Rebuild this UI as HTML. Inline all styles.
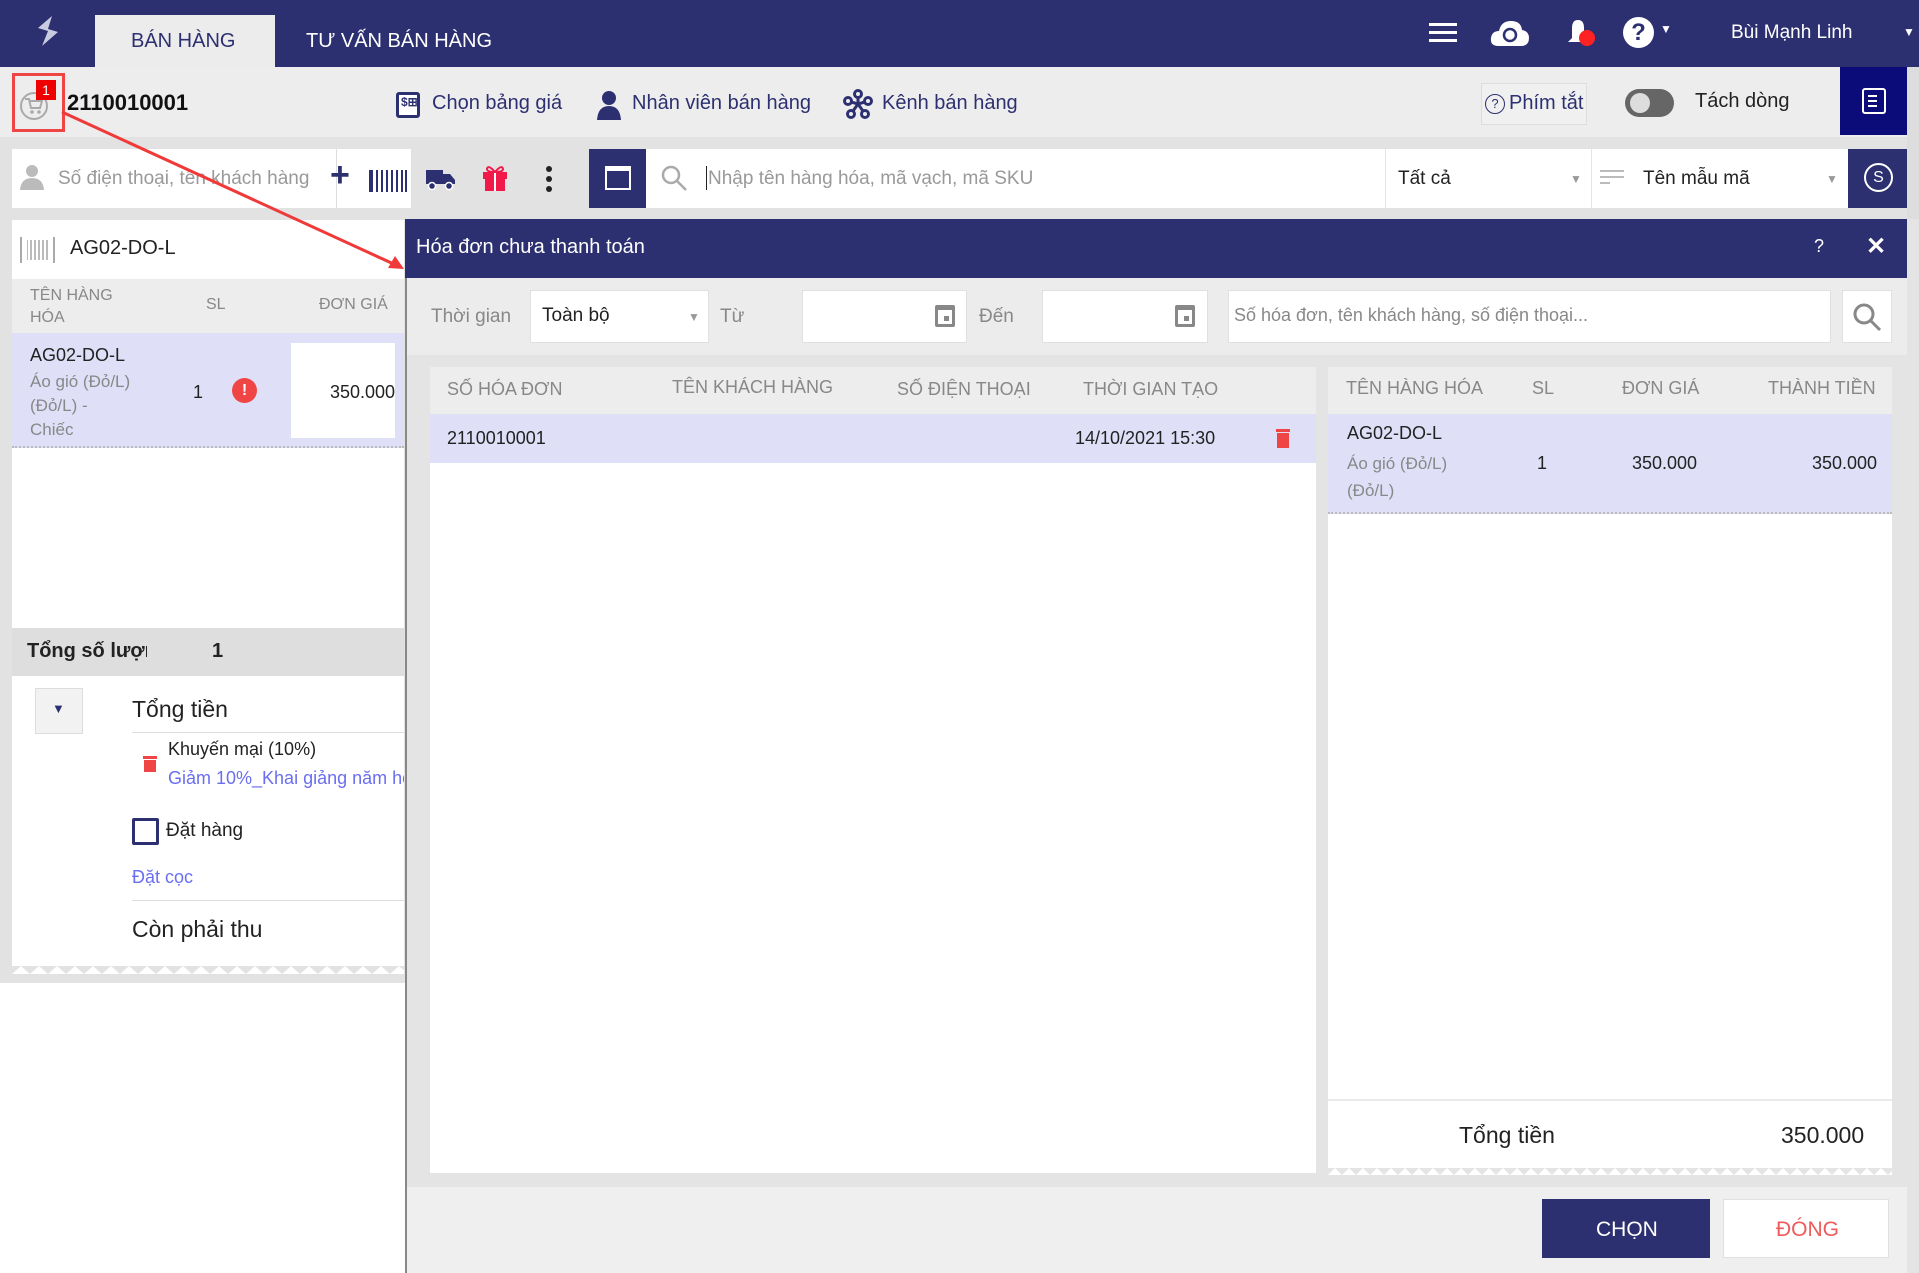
<!DOCTYPE html>
<html><head><meta charset="utf-8">
<style>
*{box-sizing:border-box;margin:0;padding:0}
body{width:1919px;height:1273px;position:relative;overflow:hidden;background:#fff;font-family:"Liberation Sans",sans-serif;color:#222}
.a{position:absolute}
.t{position:absolute;white-space:nowrap}
</style></head><body>
<!-- header -->
<div class="a" style="left:0;top:0;width:1919px;height:67px;background:#2d3070"></div>
<svg class="a" style="left:34px;top:14px" width="28" height="36" viewBox="0 0 28 36"><path d="M18 2 L4 14 L14 17 L8 32 L24 18 L14 15 Z" fill="#c9cbe0"/></svg>
<div class="a" style="left:95px;top:15px;width:180px;height:52px;background:#ececec"></div>
<div class="t" style="left:131px;top:30px;font-size:20px;color:#2d3070">BÁN HÀNG</div>
<div class="t" style="left:306px;top:30px;font-size:20px;color:#fff">TƯ VẤN BÁN HÀNG</div>
<div class="a" style="left:1429px;top:23px;width:28px;height:3px;background:#fff;box-shadow:0 8px 0 #fff,0 16px 0 #fff"></div>
<svg class="a" style="left:1490px;top:18px" width="40" height="30" viewBox="0 0 40 30"><path d="M8 28 Q0 28 1 20 Q2 13 9 13 Q11 3 21 3 Q31 3 32 12 Q39 13 39 20 Q39 28 31 28 Z" fill="#fff"/><circle cx="20" cy="17" r="6" fill="none" stroke="#2d3070" stroke-width="2.5"/></svg>
<svg class="a" style="left:1564px;top:16px" width="36" height="34" viewBox="0 0 36 34"><path d="M4 26 L8 22 L8 12 Q8 4 14 4 Q20 4 20 12 L20 22 L24 26 Z" fill="#fff"/><circle cx="23" cy="22" r="8" fill="#f22"/></svg>
<div class="a" style="left:1623px;top:17px;width:31px;height:31px;border-radius:50%;background:#fff;color:#2d3070;font-weight:bold;font-size:24px;text-align:center;line-height:31px">?</div>
<div class="t" style="left:1660px;top:22px;color:#fff;font-size:12px">▼</div>
<div class="t" style="left:1731px;top:22px;color:#fff;font-size:19px">Bùi Mạnh Linh</div>
<div class="t" style="left:1903px;top:25px;color:#fff;font-size:12px">▼</div>
<!-- row2 -->
<div class="a" style="left:0;top:67px;width:1919px;height:70px;background:#ededed"></div>
<div class="a" style="left:0;top:137px;width:1919px;height:846px;background:#e2e2e2"></div>
<div class="a" style="left:12px;top:73px;width:53px;height:59px;border:3px solid #f04545"></div>
<div class="a" style="left:20px;top:92px;width:28px;height:28px;border-radius:50%;border:2px solid #aaa"></div>
<svg class="a" style="left:25px;top:98px" width="18" height="16" viewBox="0 0 18 16" fill="#aaa"><path d="M0 1 H4 L6 10 H15 L17 3 H5" fill="none" stroke="#aaa" stroke-width="2"/><circle cx="7" cy="14" r="1.8"/><circle cx="14" cy="14" r="1.8"/></svg>
<div class="a" style="left:36px;top:80px;width:20px;height:20px;background:#e00;color:#fff;font-size:14px;text-align:center;line-height:20px">1</div>
<div class="t" style="left:67px;top:90px;font-size:22px;font-weight:bold;color:#111">2110010001</div>
<div class="a" style="left:396px;top:92px;width:24px;height:26px;border:3px solid #2d3070;border-radius:3px;background:#fff"></div>
<div class="t" style="left:401px;top:95px;font-size:12px;font-weight:bold;color:#2d3070">$⊞</div>
<div class="t" style="left:432px;top:92px;font-size:20px;color:#2d3070">Chọn bảng giá</div>
<svg class="a" style="left:596px;top:90px" width="26" height="30" viewBox="0 0 26 30"><circle cx="13" cy="8" r="7" fill="#2d3070"/><path d="M1 30 Q2 16 13 16 Q24 16 25 30 Z" fill="#2d3070"/></svg>
<div class="t" style="left:632px;top:92px;font-size:20px;color:#2d3070">Nhân viên bán hàng</div>
<svg class="a" style="left:843px;top:89px" width="30" height="30" viewBox="0 0 30 30" fill="none" stroke="#2d3070" stroke-width="3"><circle cx="15" cy="5" r="3.5"/><circle cx="5" cy="12" r="3.5"/><circle cx="25" cy="12" r="3.5"/><circle cx="8" cy="25" r="3.5"/><circle cx="22" cy="25" r="3.5"/><path d="M15 9 L15 15 M8 13 L15 15 L22 13 M10 22 L15 15 L20 22"/></svg>
<div class="t" style="left:882px;top:92px;font-size:20px;color:#2d3070">Kênh bán hàng</div>
<div class="a" style="left:1481px;top:83px;width:106px;height:42px;border:1px solid #ddd;background:#f0f0f0"></div>
<div class="a" style="left:1485px;top:94px;width:20px;height:20px;border:1.5px solid #2d3070;border-radius:50%;font-size:13px;text-align:center;line-height:17px;color:#2d3070">?</div>
<div class="t" style="left:1509px;top:92px;font-size:20px;color:#2d3070">Phím tắt</div>
<div class="a" style="left:1625px;top:89px;width:49px;height:28px;border-radius:14px;background:#666"></div>
<div class="a" style="left:1630px;top:93px;width:20px;height:20px;border-radius:50%;background:#ddd"></div>
<div class="t" style="left:1695px;top:90px;font-size:20px;color:#222">Tách dòng</div>
<div class="a" style="left:1840px;top:67px;width:67px;height:68px;background:#0b0b7a"></div>
<div class="a" style="left:1862px;top:88px;width:24px;height:26px;border:2.5px solid #fff;border-radius:3px"></div>
<div class="a" style="left:1868px;top:95px;width:9px;height:2px;background:#fff;box-shadow:0 5px 0 #fff,0 10px 0 #fff"></div>
<div class="a" style="left:1907px;top:67px;width:12px;height:1206px;background:#ddd"></div>
<!-- row3 -->
<div class="a" style="left:12px;top:149px;width:399px;height:59px;background:#fff"></div>
<div class="a" style="left:336px;top:149px;width:1px;height:59px;background:#ddd"></div>
<svg class="a" style="left:20px;top:164px" width="24" height="26" viewBox="0 0 24 26"><circle cx="12" cy="7" r="6" fill="#bbb"/><path d="M0 26 Q1 14 12 14 Q23 14 24 26Z" fill="#bbb"/></svg>
<div class="t" style="left:58px;top:168px;font-size:19px;color:#999">Số điện thoại, tên khách hàng</div>
<div class="t" style="left:330px;top:156px;font-size:34px;color:#2d3070;font-weight:bold">+</div>
<div class="a" style="left:369px;top:170px;width:38px;height:22px;border-left:2px solid #2d3070;border-right:2px solid #2d3070;background:repeating-linear-gradient(90deg,#2d3070 0 2px,#fff 2px 5px)"></div>
<svg class="a" style="left:426px;top:167px" width="30" height="24" viewBox="0 0 30 24"><rect x="0" y="3" width="17" height="14" fill="#2d3070"/><path d="M17 7 L24 7 L29 13 L29 17 L17 17Z" fill="#2d3070"/><circle cx="6" cy="19" r="3.5" fill="#2d3070" stroke="#fff" stroke-width="1.5"/><circle cx="23" cy="19" r="3.5" fill="#2d3070" stroke="#fff" stroke-width="1.5"/></svg>
<svg class="a" style="left:482px;top:164px" width="26" height="28" viewBox="0 0 26 28"><rect x="1" y="8" width="24" height="7" fill="#f0194a"/><rect x="3" y="15" width="20" height="12" fill="#f0194a"/><rect x="12" y="8" width="2" height="19" fill="#fff"/><path d="M13 8 Q6 0 5 5 Q5 8 13 8 Q20 0 21 5 Q21 8 13 8" fill="none" stroke="#f0194a" stroke-width="2"/></svg>
<div class="a" style="left:546px;top:166px;width:6px;height:6px;border-radius:50%;background:#222;box-shadow:0 10px 0 #222,0 20px 0 #222"></div>
<div class="a" style="left:589px;top:149px;width:57px;height:59px;background:#2d3070"></div>
<div class="a" style="left:605px;top:166px;width:26px;height:24px;border:2.5px solid #fff;border-top-width:5px"></div>
<div class="a" style="left:646px;top:149px;width:1261px;height:59px;background:#fff"></div>
<svg class="a" style="left:660px;top:164px" width="28" height="28" viewBox="0 0 28 28" fill="none" stroke="#aaa" stroke-width="2.5"><circle cx="11" cy="11" r="8"/><path d="M17 17 L26 26"/></svg>
<div class="a" style="left:706px;top:166px;width:1px;height:24px;background:#222"></div>
<div class="t" style="left:708px;top:168px;font-size:19px;color:#999">Nhập tên hàng hóa, mã vạch, mã SKU</div>
<div class="a" style="left:1385px;top:149px;width:1px;height:59px;background:#e4e4e4"></div>
<div class="t" style="left:1398px;top:168px;font-size:19px;color:#222">Tất cả</div>
<div class="t" style="left:1570px;top:172px;font-size:12px;color:#999">▼</div>
<div class="a" style="left:1591px;top:149px;width:1px;height:59px;background:#e4e4e4"></div>
<div class="a" style="left:1600px;top:170px;width:24px;height:2px;background:#bbb;box-shadow:0 6px 0 #bbb"></div>
<div class="a" style="left:1600px;top:182px;width:10px;height:2px;background:#bbb"></div>
<div class="t" style="left:1643px;top:168px;font-size:19px;color:#222">Tên mẫu mã</div>
<div class="t" style="left:1826px;top:172px;font-size:12px;color:#999">▼</div>
<div class="a" style="left:1848px;top:149px;width:59px;height:59px;background:#2d3070"></div>
<div class="a" style="left:1864px;top:163px;width:29px;height:29px;border:2px solid #fff;border-radius:50%;color:#fff;font-size:16px;text-align:center;line-height:25px">S</div>
<!-- left panel -->
<div class="a" style="left:12px;top:220px;width:392px;height:750px;background:#fff"></div>
<div class="a" style="left:20px;top:237px;width:35px;height:26px;border-left:2px solid #aaa;border-right:2px solid #aaa;background:repeating-linear-gradient(90deg,#bbb 0 2px,#fff 2px 4px);background-clip:content-box;padding:3px 5px"></div>
<div class="t" style="left:70px;top:237px;font-size:20px;color:#222">AG02-DO-L</div>
<div class="a" style="left:12px;top:279px;width:392px;height:54px;background:#ededed"></div>
<div class="t" style="left:30px;top:285px;font-size:16px;color:#888;line-height:22px">TÊN HÀNG<br>HÓA</div>
<div class="t" style="left:206px;top:296px;font-size:16px;color:#888">SL</div>
<div class="t" style="left:319px;top:296px;font-size:16px;color:#888">ĐƠN GIÁ</div>
<div class="a" style="left:12px;top:333px;width:392px;height:115px;background:#dfe0f7;border-bottom:2px dotted #bbb"></div>
<div class="t" style="left:30px;top:345px;font-size:18px;color:#222">AG02-DO-L</div>
<div class="t" style="left:30px;top:370px;font-size:17px;color:#888;line-height:24px">Áo gió (Đỏ/L)<br>(Đỏ/L) -<br>Chiếc</div>
<div class="t" style="left:193px;top:382px;font-size:18px">1</div>
<div class="a" style="left:232px;top:378px;width:25px;height:25px;border-radius:50%;background:#f04545;color:#fff;font-weight:bold;font-size:16px;text-align:center;line-height:25px">!</div>
<div class="a" style="left:291px;top:343px;width:104px;height:95px;background:#fff"></div>
<div class="t" style="left:330px;top:382px;font-size:18px;color:#222">350.000</div>
<div class="a" style="left:12px;top:628px;width:392px;height:48px;background:#dedede"></div>
<div class="t" style="left:27px;top:640px;font-size:20px;font-weight:bold;color:#222;width:120px;overflow:hidden">Tổng số lượng</div>
<div class="t" style="left:212px;top:640px;font-size:20px;font-weight:bold">1</div>
<div class="a" style="left:35px;top:688px;width:48px;height:46px;background:#f2f2f2;border:1px solid #ddd"></div>
<div class="t" style="left:52px;top:701px;font-size:13px;color:#2d3070">▼</div>
<div class="t" style="left:132px;top:696px;font-size:23px;color:#222">Tổng tiền</div>
<div class="a" style="left:132px;top:732px;width:272px;height:1px;background:#ddd"></div>
<svg class="a" style="left:142px;top:754px" width="16" height="18" viewBox="0 0 16 18"><rect x="1" y="2" width="14" height="3" fill="#f04545"/><rect x="2" y="6" width="12" height="12" fill="#f04545"/></svg>
<div class="t" style="left:168px;top:739px;font-size:18px;color:#222">Khuyến mại (10%)</div>
<div class="t" style="left:168px;top:768px;font-size:18px;color:#6a6ef0;width:236px;overflow:hidden">Giảm 10%_Khai giảng năm học</div>
<div class="a" style="left:132px;top:818px;width:27px;height:27px;border:3px solid #2d3070;border-radius:2px"></div>
<div class="t" style="left:166px;top:820px;font-size:19px;color:#222">Đặt hàng</div>
<div class="t" style="left:132px;top:867px;font-size:18px;color:#6a6ef0">Đặt cọc</div>
<div class="a" style="left:132px;top:900px;width:272px;height:1px;background:#ddd"></div>
<div class="t" style="left:132px;top:916px;font-size:23px;color:#222">Còn phải thu</div>
<svg class="a" style="left:12px;top:962px" width="392" height="12"><defs><pattern id="z" width="18" height="12" patternUnits="userSpaceOnUse"><path d="M0 12 L9 4 L18 12Z" fill="#fff"/></pattern></defs><rect width="392" height="12" fill="#e2e2e2"/><path d="M0 0 H392 V4 H0Z" fill="#fff"/><rect width="392" height="12" fill="url(#z)"/></svg>
<!-- dialog -->
<div class="a" style="left:405px;top:219px;width:1514px;height:1054px;background:#e4e4e4;border-left:2px solid #888"></div>
<div class="a" style="left:405px;top:219px;width:1502px;height:59px;background:#2d3070"></div>
<div class="t" style="left:416px;top:236px;font-size:20px;color:#fff">Hóa đơn chưa thanh toán</div>
<div class="t" style="left:1814px;top:236px;font-size:18px;color:#fff">?</div>
<div class="t" style="left:1866px;top:232px;font-size:24px;color:#fff;font-weight:bold">✕</div>
<div class="a" style="left:407px;top:278px;width:1500px;height:77px;background:#ececec"></div>
<div class="t" style="left:431px;top:306px;font-size:19px;color:#888">Thời gian</div>
<div class="a" style="left:530px;top:290px;width:179px;height:53px;background:#fff;border:1px solid #e0e0e0"></div>
<div class="t" style="left:542px;top:305px;font-size:19px;color:#222">Toàn bộ</div>
<div class="t" style="left:688px;top:310px;font-size:12px;color:#999">▼</div>
<div class="t" style="left:720px;top:306px;font-size:19px;color:#888">Từ</div>
<div class="a" style="left:802px;top:290px;width:165px;height:53px;background:#fff;border:1px solid #e0e0e0"></div>
<div class="a" style="left:935px;top:305px;width:20px;height:22px;border:3px solid #888;border-top-width:5px;border-radius:2px"></div>
<div class="a" style="left:944px;top:316px;width:5px;height:5px;background:#888"></div>
<div class="t" style="left:979px;top:306px;font-size:19px;color:#888">Đến</div>
<div class="a" style="left:1042px;top:290px;width:166px;height:53px;background:#fff;border:1px solid #e0e0e0"></div>
<div class="a" style="left:1175px;top:305px;width:20px;height:22px;border:3px solid #888;border-top-width:5px;border-radius:2px"></div>
<div class="a" style="left:1184px;top:316px;width:5px;height:5px;background:#888"></div>
<div class="a" style="left:1228px;top:290px;width:603px;height:53px;background:#fff;border:1px solid #e0e0e0"></div>
<div class="t" style="left:1234px;top:305px;font-size:18px;color:#888">Số hóa đơn, tên khách hàng, số điện thoại...</div>
<div class="a" style="left:1842px;top:290px;width:50px;height:53px;background:#fff;border:1px solid #e0e0e0"></div>
<svg class="a" style="left:1852px;top:302px" width="30" height="30" viewBox="0 0 30 30" fill="none" stroke="#888" stroke-width="3"><circle cx="12" cy="12" r="9"/><path d="M19 19 L28 28"/></svg>
<!-- left table -->
<div class="a" style="left:430px;top:367px;width:886px;height:806px;background:#fff"></div>
<div class="a" style="left:430px;top:367px;width:886px;height:47px;background:#ededed"></div>
<div class="t" style="left:447px;top:379px;font-size:18px;color:#888">SỐ HÓA ĐƠN</div>
<div class="t" style="left:672px;top:377px;font-size:18px;color:#888">TÊN KHÁCH HÀNG</div>
<div class="t" style="left:897px;top:379px;font-size:18px;color:#888">SỐ ĐIỆN THOẠI</div>
<div class="t" style="left:1083px;top:379px;font-size:18px;color:#888">THỜI GIAN TẠO</div>
<div class="a" style="left:430px;top:414px;width:886px;height:49px;background:#dfe0f7"></div>
<div class="t" style="left:447px;top:428px;font-size:18px;color:#222">2110010001</div>
<div class="t" style="left:1075px;top:428px;font-size:18px;color:#222">14/10/2021 15:30</div>
<svg class="a" style="left:1276px;top:428px" width="14" height="20" viewBox="0 0 14 20"><rect x="0" y="1" width="14" height="3" fill="#f04545"/><rect x="1" y="5" width="12" height="15" fill="#f04545"/></svg>
<!-- right table -->
<div class="a" style="left:1328px;top:367px;width:564px;height:806px;background:#fff"></div>
<div class="a" style="left:1328px;top:367px;width:564px;height:47px;background:#ededed"></div>
<div class="t" style="left:1346px;top:378px;font-size:18px;color:#888">TÊN HÀNG HÓA</div>
<div class="t" style="left:1532px;top:378px;font-size:18px;color:#888">SL</div>
<div class="t" style="left:1622px;top:378px;font-size:18px;color:#888">ĐƠN GIÁ</div>
<div class="t" style="left:1768px;top:378px;font-size:18px;color:#888">THÀNH TIỀN</div>
<div class="a" style="left:1328px;top:414px;width:564px;height:100px;background:#dfe0f7;border-bottom:2px dotted #bbb"></div>
<div class="t" style="left:1347px;top:423px;font-size:18px;color:#222">AG02-DO-L</div>
<div class="t" style="left:1347px;top:450px;font-size:17px;color:#888;line-height:27px">Áo gió (Đỏ/L)<br>(Đỏ/L)</div>
<div class="t" style="left:1537px;top:453px;font-size:18px">1</div>
<div class="t" style="left:1632px;top:453px;font-size:18px">350.000</div>
<div class="t" style="left:1812px;top:453px;font-size:18px">350.000</div>
<div class="a" style="left:1328px;top:1099px;width:564px;height:2px;background:#eaeaea"></div>
<div class="t" style="left:1459px;top:1122px;font-size:23px;color:#222">Tổng tiền</div>
<div class="t" style="left:1781px;top:1122px;font-size:23px;color:#222">350.000</div>
<svg class="a" style="left:1328px;top:1163px" width="564" height="12"><defs><pattern id="z2" width="14" height="12" patternUnits="userSpaceOnUse"><path d="M0 12 L7 5 L14 12Z" fill="#fff"/></pattern></defs><rect width="564" height="12" fill="#e4e4e4"/><path d="M0 0 H564 V5 H0Z" fill="#fff"/><rect width="564" height="12" fill="url(#z2)"/></svg>
<div class="a" style="left:407px;top:1187px;width:1500px;height:86px;background:#efefef"></div>
<div class="a" style="left:1542px;top:1199px;width:168px;height:59px;background:#2d3070"></div>
<div class="t" style="left:1596px;top:1218px;font-size:21px;color:#fff">CHỌN</div>
<div class="a" style="left:1723px;top:1199px;width:166px;height:59px;background:#fff;border:1px solid #e0e0e0"></div>
<div class="t" style="left:1776px;top:1218px;font-size:21px;color:#f05a5a">ĐÓNG</div>
<!-- arrow -->
<svg class="a" style="left:0;top:0" width="420" height="280"><path d="M62 112 L398 266" stroke="#f03a3a" stroke-width="3"/><path d="M404 269 L388 268 L395 256Z" fill="#f03a3a"/></svg>
</body></html>
